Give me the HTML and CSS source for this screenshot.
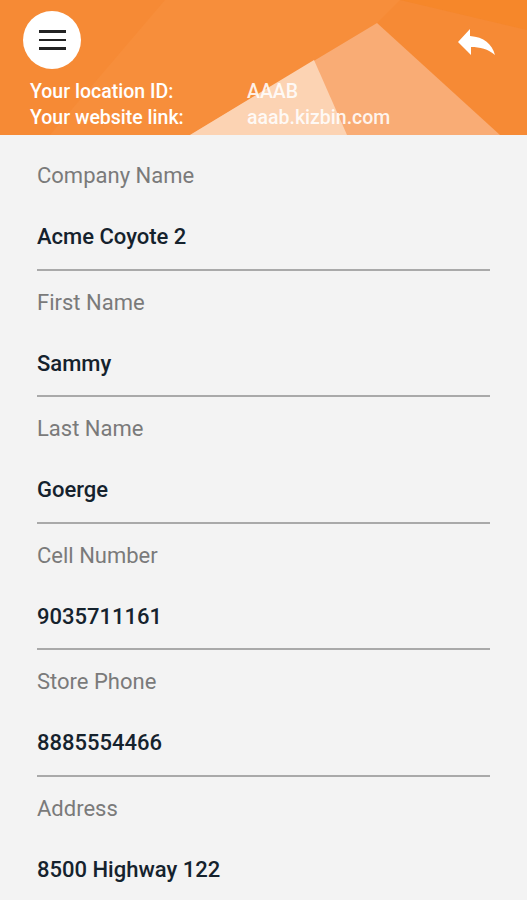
FILE: index.html
```html
<!DOCTYPE html>
<html lang="en">
<head>
  <meta charset="UTF-8">
  <meta name="viewport" content="width=device-width, initial-scale=1.0">
  <title>Store Profile</title>
  <link rel="stylesheet" href="styles.css">
</head>
<body>
  <header class="header">
    <svg class="header-bg" viewBox="0 0 527 135" preserveAspectRatio="none">
      <polygon points="165,0 400,0 377,23 190,135 50,135" fill="#f78e3b" />
      <polygon points="400,0 527,0 527,30" fill="#f5831f" opacity="0.5" />
      <polygon points="190,135 377,23 500,135" fill="#f9ac75" />
      <polygon points="190,135 314,60 347,135" fill="#fcd3b3" />
    </svg>
    <div class="top-bar">
      <button class="menu-btn" type="button">
        <span></span><span></span><span></span>
      </button>
      <svg class="reply-icon" width="37" height="26" viewBox="0 0 37 26">
        <path d="M12 0 L0 13 L13 26 V18 C22 18 30 20 37 26 C34 15 26 8 12 7 Z" fill="#fff" />
      </svg>
    </div>
    <div class="info">
      <span class="info-label">Your location ID:</span>
      <span class="info-value">AAAB</span>
      <span class="info-label">Your website link:</span>
      <span class="info-value">aaab.kizbin.com</span>
    </div>
  </header>

  <main class="fields">
    <div class="field">
      <div class="field-label">Company Name</div>
      <div class="field-value">Acme Coyote 2</div>
    </div>
    <div class="field">
      <div class="field-label">First Name</div>
      <div class="field-value">Sammy</div>
    </div>
    <div class="field">
      <div class="field-label">Last Name</div>
      <div class="field-value">Goerge</div>
    </div>
    <div class="field">
      <div class="field-label">Cell Number</div>
      <div class="field-value">9035711161</div>
    </div>
    <div class="field">
      <div class="field-label">Store Phone</div>
      <div class="field-value">8885554466</div>
    </div>
    <div class="field">
      <div class="field-label">Address</div>
      <div class="field-value">8500 Highway 122</div>
    </div>
  </main>
</body>
</html>
```

FILE: styles.css
```css
body {
  margin: 0;
  font-family: Roboto, "Liberation Sans", sans-serif;
  background-color: #f3f3f3;
  overflow: hidden;
}
.header {
  position: relative;
  height: 135px;
  box-sizing: border-box;
  padding: 11px 32px 0 23px;
  background-color: #f68a35;
  color: #fff;
}
.header-bg {
  position: absolute;
  top: 0;
  left: 0;
  width: 100%;
  height: 100%;
}
.top-bar {
  position: relative;
  display: flex;
  justify-content: space-between;
  align-items: center;
}
.menu-btn {
  width: 58px;
  height: 58px;
  border: none;
  border-radius: 50%;
  background-color: #fff;
  display: flex;
  flex-direction: column;
  align-items: center;
  justify-content: center;
  gap: 6px;
  padding: 0;
}
.menu-btn span {
  display: block;
  width: 27px;
  height: 2.5px;
  background-color: #222;
}
.reply-icon {
  margin-top: 4px;
}
.info {
  position: relative;
  display: grid;
  grid-template-columns: 217px auto;
  margin-top: 10px;
  margin-left: 7px;
  font-size: 19.5px;
  font-weight: 500;
  line-height: 26px;
}
.info-value {
  color: rgba(255, 255, 255, 0.88);
}
.fields {
  padding: 9px 37px 0;
}
.field {
  padding: 18px 0 17.5px;
  border-bottom: 2px solid #a9a9a9;
}
.field-label {
  font-size: 22px;
  line-height: 28px;
  color: #7a7a7a;
}
.field-value {
  margin-top: 33px;
  font-size: 22px;
  font-weight: 500;
  line-height: 28px;
  color: #15222d;
}
```
